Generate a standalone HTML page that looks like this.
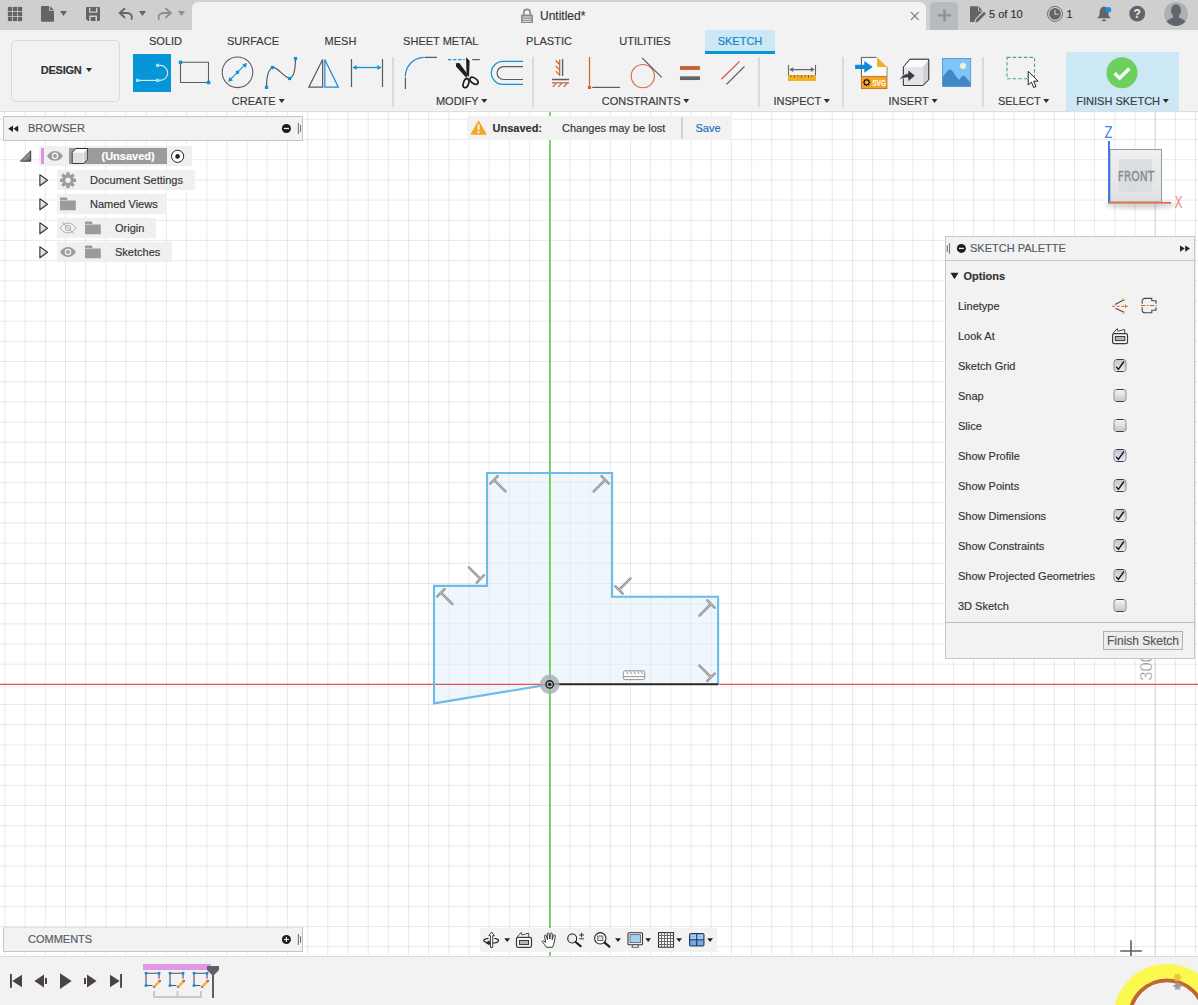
<!DOCTYPE html>
<html lang="en">
<head>
<meta charset="utf-8">
<title>Untitled* - Fusion</title>
<style>
html,body{margin:0;padding:0;}
body{width:1198px;height:1005px;overflow:hidden;position:relative;background:#fff;font-family:"Liberation Sans",Arial,sans-serif;font-size:11px;color:#3c3c3c;}
.abs{position:absolute;}
.t,.pl,.tabl,.grp{-webkit-text-stroke:0.160px currentColor;}
.t{position:absolute;white-space:nowrap;line-height:14px;height:14px;}
.b{font-weight:bold;}
#topbar{position:absolute;left:0;top:0;width:1198px;height:30px;background:#cfcfcd;}
#tab{position:absolute;left:192px;top:2px;width:734px;height:28px;background:#f2f2f2;border-radius:6px 6px 0 0;}
#toolbar{position:absolute;left:0;top:30px;width:1198px;height:81px;background:#f2f2f2;}
#canvas{position:absolute;left:0;top:111px;width:1198px;height:845px;overflow:hidden;background:#fff;}
#bottombar{position:absolute;left:0;top:956px;width:1198px;height:49px;background:#f2f2f2;overflow:hidden;}
.tabl{position:absolute;top:34px;height:14px;line-height:14px;font-size:11px;color:#3a3a3a;transform:translateX(-50%);white-space:nowrap;}
.grp{position:absolute;top:94px;height:14px;line-height:14px;font-size:11px;color:#3a3a3a;transform:translateX(-50%);white-space:nowrap;}
.sep{position:absolute;top:57px;width:1.700px;height:50px;background:#dadada;}
.dd{display:inline-block;width:0;height:0;border-left:3.800px solid transparent;border-right:3.800px solid transparent;border-top:4.300px solid #2e2e2e;vertical-align:middle;margin-left:2.700px;position:relative;top:-1px;}
.panelhdr{position:absolute;background:#f2f2f2;border:1px solid #c5c5c5;box-sizing:border-box;}
.row{position:absolute;height:19.600px;background:#f0f0f0;}
.cb{position:absolute;left:1113.5px;width:13px;height:13px;box-sizing:border-box;border:1px solid #555;border-radius:3px;background:linear-gradient(#f4f4f4,#c8ccd0);}
.pl{position:absolute;left:958px;font-size:11px;line-height:14px;height:14px;color:#333;white-space:nowrap;}
</style>
</head>
<body>
<div id="topbar"></div>
<div id="tab"></div>
<div class="t" style="left:540px;top:9px;font-size:12px;color:#333;">Untitled*</div>
<div class="abs" style="left:930px;top:2px;width:28px;height:28px;background:#b4bcc0;border-radius:5px 5px 0 0;"></div>
<div class="t" style="left:989px;top:7px;font-size:11px;color:#333;">5 of 10</div>
<div class="t" style="left:1066.5px;top:7px;font-size:11px;color:#333;">1</div>
<div id="toolbar"></div>
<div class="abs" style="left:10.800px;top:40px;width:109.500px;height:61.500px;box-sizing:border-box;border:1.600px solid #d9d9d9;border-radius:5px;"></div>
<div class="t b" style="left:40.800px;top:63px;font-size:11px;color:#333;letter-spacing:-0.250px;">DESIGN<span class="dd" style="margin-left:5px"></span></div>
<div class="abs" style="left:705px;top:30px;width:70px;height:24px;background:#cde7f6;border-bottom:3px solid #0696d7;box-sizing:border-box;"></div>
<div class="tabl" style="left:165.5px;">SOLID</div>
<div class="tabl" style="left:253px;">SURFACE</div>
<div class="tabl" style="left:340.5px;">MESH</div>
<div class="tabl" style="left:440.8px;">SHEET METAL</div>
<div class="tabl" style="left:549px;">PLASTIC</div>
<div class="tabl" style="left:645px;">UTILITIES</div>
<div class="tabl" style="left:740px;color:#0a86c8;">SKETCH</div>
<div class="abs" style="left:1066px;top:52px;width:113px;height:59px;background:#cde8f5;"></div>
<div class="abs" style="left:133px;top:54px;width:38px;height:38px;background:#0696d7;"></div>
<div class="sep" style="left:392.300px;"></div>
<div class="sep" style="left:532.300px;"></div>
<div class="sep" style="left:758.200px;"></div>
<div class="sep" style="left:842.200px;"></div>
<div class="sep" style="left:982.300px;"></div>
<div class="grp" style="left:258.05px;">CREATE<span class="dd"></span></div>
<div class="grp" style="left:461.65px;">MODIFY<span class="dd"></span></div>
<div class="grp" style="left:645.55px;">CONSTRAINTS<span class="dd"></span></div>
<div class="grp" style="left:801.65px;">INSPECT<span class="dd"></span></div>
<div class="grp" style="left:912.95px;">INSERT<span class="dd"></span></div>
<div class="grp" style="left:1023.65px;">SELECT<span class="dd"></span></div>
<div class="grp" style="left:1122.55px;">FINISH SKETCH<span class="dd"></span></div>
<div class="abs" style="left:0;top:110.800px;width:1198px;height:1.100px;background:#dedede;z-index:5;"></div>
<svg class="abs" style="left:0;top:0" width="1198" height="30" viewBox="0 0 1198 30">
<g fill="#616469">
<!-- grid -->
<path d="M8 7h4v4h-4zM13 7h4v4h-4zM18 7h4v4h-4zM8 12h4v4h-4zM13 12h4v4h-4zM18 12h4v4h-4zM8 17h4v4h-4zM13 17h4v4h-4zM18 17h4v4h-4z" stroke="#616469" stroke-width="0.250" stroke-linejoin="round"/>
<!-- file -->
<path d="M42.2 6h7v4.8h4.8v9.8a1.2 1.2 0 0 1-1.2 1.2h-10.6a1.2 1.2 0 0 1-1.2-1.2v-13.4a1.2 1.2 0 0 1 1.2-1.2zM50.2 6.3l3.6 3.6h-3.6z"/>
<path d="M60 11h7l-3.5 5z"/>
<!-- save -->
<path d="M87 7h12a1 1 0 0 1 1 1v12a1 1 0 0 1-1 1h-11l-2-2v-11a1 1 0 0 1 1-1zM89 7.8v5h8.400v-5h-1.4v3.600h-5.600v-3.600zM89.300 21v-5.400h7.700v5.400h-1.500v-3.900h-4.700v3.900z" fill-rule="evenodd"/>
<!-- undo -->
<path d="M125 8.300l-5.300 4.700 5.300 4.700" fill="none" stroke="#616469" stroke-width="1.900" stroke-linejoin="miter"/>
<path d="M120.500 13h6.500a4.500 4.500 0 0 1 4.300 6.800" fill="none" stroke="#616469" stroke-width="1.900"/>
<path d="M139 11h7l-3.500 5z"/>
</g>
<g fill="#8c8e92">
<path d="M165.500 8.300l5.300 4.700-5.300 4.700" fill="none" stroke="#8c8e92" stroke-width="1.900"/>
<path d="M170 13h-6.500a4.500 4.500 0 0 0-4.300 6.800" fill="none" stroke="#8c8e92" stroke-width="1.900"/>
<path d="M178 11h7l-3.500 5z"/>
</g>
<!-- lock -->
<g transform="translate(0 0.800)">
<path d="M523.800 14v-2.200a3.200 3.200 0 0 1 6.400 0v2.200" fill="none" stroke="#8a8a8a" stroke-width="1.700"/>
<rect x="521" y="13.600" width="12" height="8.600" rx="0.800" fill="#8a8a8a"/>
<path d="M522.500 16.200h9M522.500 18.400h9M522.500 20.500h9" stroke="#f2f2f2" stroke-width="0.900"/>
</g>
<!-- close x -->
<path d="M911 12.200l7.600 7.600M918.600 12.200l-7.600 7.600" stroke="#777" stroke-width="1.200" fill="none"/>
<!-- plus -->
<path d="M938 15.400h13M944.500 9.400v12" stroke="#8d9194" stroke-width="2.400" fill="none"/>
<!-- file pencil -->
<g fill="#616469">
<path d="M970 6.300h8.200v5h4.300l-7.300 7.600-1 3h-4.200zM979 6.600l3.400 3.800h-3.400z"/>
<path d="M984 11.800l2 2-7.800 7.800-2.800 0.800 0.800-2.800z"/>
</g>
<!-- clock -->
<circle cx="1055" cy="13.900" r="7.500" fill="none" stroke="#616469" stroke-width="0.900"/>
<circle cx="1055" cy="13.900" r="5.800" fill="#616469"/>
<path d="M1055 10v4.200h3.600" stroke="#cfcfcd" stroke-width="1.100" fill="none"/>
<!-- bell -->
<g fill="#616469">
<path d="M1104 6.800c3 0 4.300 2.600 4.300 5.600 0 2.600 0.800 4.200 2.500 5.800h-13.600c1.700-1.600 2.500-3.200 2.500-5.800 0-3 1.300-5.600 4.300-5.600z"/>
<path d="M1102 19.600h4a2 2 0 0 1-4 0z"/>
</g>
<circle cx="1108.300" cy="9.800" r="2.900" fill="#1e90e0"/>
<!-- help -->
<circle cx="1137.200" cy="13.700" r="7.900" fill="#616469"/>
<text x="1137.200" y="18" text-anchor="middle" font-family="Liberation Sans, sans-serif" font-weight="bold" font-size="12" fill="#f2f2f2">?</text>
<!-- avatar -->
<clipPath id="avc"><circle cx="1176" cy="14" r="11.900"/></clipPath>
<circle cx="1176" cy="14" r="11.900" fill="#aab0b8"/>
<g clip-path="url(#avc)" fill="#626569">
<ellipse cx="1176" cy="10.500" rx="5" ry="6.300"/>
<path d="M1164.500 27c0-5.500 4-8 8.500-9.300h6c4.500 1.300 8.500 3.800 8.500 9.300z"/>
<rect x="1173" y="14" width="6" height="6"/>
</g>
</svg>
<svg class="abs" style="left:0;top:30px" width="1198" height="81" viewBox="0 30 1198 81">
<!-- line tool (active) -->
<g>
<path d="M139 80.400H156" stroke="#e6eef2" stroke-width="1.100"/>
<path d="M159.200 65.400h1a7.500 7.500 0 0 1 0 15h-1" fill="none" stroke="#d6e6ee" stroke-width="1.100"/>
<rect x="136" y="78.800" width="3.200" height="3.200" fill="#a9d9f3"/>
<rect x="156" y="78.800" width="3.200" height="3.200" fill="#a9d9f3"/>
<rect x="156" y="63.800" width="3.200" height="3.200" fill="#a9d9f3"/>
</g>
<!-- rectangle -->
<path d="M180.500 62.300h28v20.200h-28z" fill="none" stroke="#595b60" stroke-width="1.050"/>
<rect x="178.800" y="60.600" width="3.400" height="3.400" fill="#0696d7"/>
<rect x="206.900" y="80.800" width="3.400" height="3.400" fill="#0696d7"/>
<!-- circle -->
<circle cx="237.500" cy="72.300" r="15.300" fill="none" stroke="#5e5456" stroke-width="1.050"/>
<path d="M230.500 79.300L244.600 65.200" stroke="#1493dc" stroke-width="1.100"/>
<path d="M228.200 81.700l1.200-4.800 3.600 3.600zM247 63.100l-1.200 4.800-3.600-3.600z" fill="#1493dc"/>
<rect x="235.900" y="70.700" width="3.200" height="3.200" fill="#0696d7"/>
<!-- spline -->
<path d="M266.500 87.400C266.500 78 268.500 69.500 272.400 67.500C277 66.500 283 76.500 289.600 78.500C293.500 77 295.500 69 295.500 58.500" fill="none" stroke="#595b60" stroke-width="1.200"/>
<g fill="#0696d7"><rect x="264.900" y="85.800" width="3.200" height="3.200"/><rect x="270.800" y="65.900" width="3.200" height="3.200"/><rect x="288" y="76.900" width="3.200" height="3.200"/><rect x="293.900" y="56.900" width="3.200" height="3.200"/></g>
<!-- mirror -->
<path d="M322.600 59.600V87.200H308.800Z" fill="none" stroke="#595b60" stroke-width="1.200"/>
<path d="M324.800 59.600V87.200H338.300Z" fill="none" stroke="#1a8ad6" stroke-width="1.200"/>
<!-- dimension -->
<path d="M351.500 59V87M382.500 59V87" stroke="#595b60" stroke-width="1.200"/>
<path d="M355 67.500H379" stroke="#1493dc" stroke-width="1.300"/>
<path d="M352.400 67.500l4.200-2.400v4.800zM381.600 67.500l-4.200-2.400v4.800z" fill="#1493dc"/>
<!-- fillet -->
<path d="M405.400 77.500V89M424.500 57.300H437" stroke="#595b60" stroke-width="1.200"/>
<path d="M405.400 76.500A19 19 0 0 1 423.700 57.400" fill="none" stroke="#1a8ad6" stroke-width="1.200"/>
<!-- trim -->
<path d="M448 59.600H464.500" stroke="#1493dc" stroke-width="1.200" stroke-dasharray="3.300 1.800"/>
<path d="M472.200 59.600H479.800" stroke="#595b60" stroke-width="1.200"/>
<g fill="#1e1e1e">
<path d="M466 57.200l3.600 3.600-0.600 16.200-2.300 0.500z"/>
<path d="M455.900 63.200l3.400-0.200 10 13.400-2.600 1.800-10.600-11.600z"/>
</g>
<ellipse cx="466" cy="83.200" rx="2.600" ry="4.600" transform="rotate(18 466 83.200)" fill="none" stroke="#1e1e1e" stroke-width="1.700"/>
<ellipse cx="474" cy="80.800" rx="2.600" ry="4.600" transform="rotate(-55 474 80.800)" fill="none" stroke="#1e1e1e" stroke-width="1.700"/>
<circle cx="467.600" cy="76.800" r="1" fill="#f2f2f2"/>
<!-- offset -->
<path d="M523 61.300H502.900a11.550 11.550 0 0 0 0 23.100H523" fill="none" stroke="#1493dc" stroke-width="1.300"/>
<path d="M523 66.600H503.500a6.450 6.450 0 0 0 0 12.900H523" fill="none" stroke="#595b60" stroke-width="1.200"/>
<!-- horiz/vert -->
<path d="M562.600 59V76M552 79.500H569" stroke="#595b60" stroke-width="1.300"/>
<path d="M559.700 59.500V76M559.700 64.500l-4-4M559.700 69.800l-4-4M559.700 75.200l-4-4M552 82.800H569M556.500 82.800l-3.600 4M562 82.800l-3.600 4M567.500 82.800l-3.600 4" stroke="#c8642d" stroke-width="1.200" fill="none"/>
<!-- coincident -->
<path d="M589.500 57V85.500" stroke="#c8642d" stroke-width="1.200"/>
<rect x="587.900" y="85.800" width="3.200" height="3.200" fill="#c8642d"/>
<path d="M592.200 87.400H620" stroke="#595b60" stroke-width="1.200"/>
<!-- tangent -->
<circle cx="642.800" cy="76.100" r="11.600" fill="none" stroke="#d06a4a" stroke-width="1.100"/>
<path d="M642 57.900L661.800 77.400" stroke="#595b60" stroke-width="1.200"/>
<!-- equal -->
<rect x="679.500" y="65.700" width="20.800" height="4.600" fill="#c0622f" stroke="#fafafa" stroke-width="0.800"/>
<rect x="679.500" y="75.900" width="20.800" height="4.600" fill="#616469" stroke="#fafafa" stroke-width="0.800"/>
<!-- parallel -->
<path d="M721.400 79.300L739.600 61.400" stroke="#d2504c" stroke-width="1.200"/>
<path d="M726.500 84.400L744.500 66.300" stroke="#5b5456" stroke-width="1.200"/>
<!-- inspect -->
<rect x="788" y="75" width="28" height="6" fill="#f1b021"/>
<path d="M791 75v2M794.500 75v3M798 75v2M801.500 75v3M805 75v2M808.500 75v3M812 75v2" stroke="#7a6a3a" stroke-width="0.900"/>
<path d="M788.500 65V75M815.500 65V75M791 69.600H813" stroke="#66686c" stroke-width="1.100"/>
<path d="M789.200 69.600l4-2.300v4.600zM814.800 69.600l-4-2.300v4.600z" fill="#66686c"/>
<!-- insert svg -->
<path d="M861.400 76V57.400H876.500M886.900 67V76" fill="none" stroke="#595b60" stroke-width="1"/>
<path d="M862 58h15v9h9.500v9h-24.500z" fill="#fafafa"/>
<path d="M877.200 57.200l9.800 9.700h-9.800z" fill="#f1b021"/>
<path d="M855.100 64.700h9.200v-3.600l8.400 5.800-8.400 5.800v-3.700h-9.200z" fill="#0a8ad8"/>
<rect x="861.400" y="76.400" width="25.500" height="12.200" fill="#f1a91f" stroke="#c8642d" stroke-width="0.900"/>
<text x="872.200" y="85.900" font-family="Liberation Sans, sans-serif" font-weight="bold" font-size="8.500" fill="#fff" textLength="14" lengthAdjust="spacingAndGlyphs">SVG</text>
<g stroke="#111" stroke-width="1" fill="none"><circle cx="866.600" cy="82.400" r="2.500"/><path d="M866.600 78.700v1.400M866.600 84.700v1.400M862.900 82.400h1.400M868.900 82.400h1.400M864 79.800l1 1M868.200 84l1 1M864 85l1-1M868.200 80.800l1-1" stroke-width="1.300"/></g>
<!-- derive cube -->
<path d="M903.400 67L909.800 59.300H928.700V79.800L922.800 85.500H903.400Z" fill="#f4f4f5" stroke="#3a3a45" stroke-width="1"/>
<path d="M922.800 67L928.700 59.300V79.800L922.800 85.500Z" fill="#d0d1d4"/>
<path d="M903.400 67H922.800V85.500H903.400Z" fill="#e3e4e6"/>
<path d="M903.400 67L909.800 59.300H928.700L922.800 67Z" fill="#fbfbfb"/>
<path d="M903.400 67L909.800 59.300H928.700V79.800L922.800 85.500H903.400Z" fill="none" stroke="#3a3a45" stroke-width="1"/>
<path d="M899.400 79.800c2.200-4 5-6 8.600-6.200v-3.800l7.200 5.900-7.200 6v-3.900c-3.200-0.200-6 0.500-8.600 2z" fill="#3a3a45" stroke="#f2f2f2" stroke-width="0.600"/>
<!-- image -->
<rect x="942.400" y="58.400" width="28.300" height="28" fill="#80c5fa" stroke="#4a90d2" stroke-width="0.800"/>
<path d="M942.800 77l5-6.500c1.600-1.200 3-1.200 4.200 0l6.800 9.600 3.300-3.900c1-1 2-1 2.800 0l5.400 6v4h-27.500z" fill="#3f88c5"/>
<circle cx="963" cy="65.800" r="3.100" fill="#f5f1c9"/>
</svg>
<svg class="abs" style="left:985px;top:50px" width="213" height="61" viewBox="985 50 213 61">
<rect x="1007" y="57.400" width="27.500" height="21.400" fill="none" stroke="#4fae68" stroke-width="1.100" stroke-dasharray="3.600 2"/>
<path d="M1028.200 71.300v13.700l3.200-2.900 2.300 5.400 2.300-1-2.300-5.300h4.400z" fill="#fff" stroke="#22222c" stroke-width="1"/>
<circle cx="1122" cy="72.800" r="15.500" fill="#6dcf5d"/>
<path d="M1114.600 73.200l5 4.900 9.800-9.600" fill="none" stroke="#fff" stroke-width="3.400"/>
</svg>
<div id="canvas">
<svg class="abs" style="left:0;top:0" width="1198" height="845" viewBox="0 0 1198 845"><path d="M4.94 0V845M25.12 0V845M45.3 0V845M65.48 0V845M85.66 0V845M105.84 0V845M126.02 0V845M146.2 0V845M166.38 0V845M186.56 0V845M206.74 0V845M226.92 0V845M247.1 0V845M267.28 0V845M287.46 0V845M307.64 0V845M327.82 0V845M348.0 0V845M368.18 0V845M388.36 0V845M408.54 0V845M428.72 0V845M448.9 0V845M469.08 0V845M489.26 0V845M509.44 0V845M529.62 0V845M569.98 0V845M590.16 0V845M610.34 0V845M630.52 0V845M650.7 0V845M670.88 0V845M691.06 0V845M711.24 0V845M731.42 0V845M751.6 0V845M771.78 0V845M791.96 0V845M812.14 0V845M832.32 0V845M852.5 0V845M872.68 0V845M892.86 0V845M913.04 0V845M933.22 0V845M953.4 0V845M973.58 0V845M993.76 0V845M1013.94 0V845M1034.12 0V845M1054.3 0V845M1074.48 0V845M1094.66 0V845M1114.84 0V845M1135.02 0V845M1155.2 0V845M1175.38 0V845M1195.56 0V845" stroke="#000" stroke-opacity="0.085" stroke-width="1" fill="none"/><path d="M0 8.36H1198M0 28.54H1198M0 48.72H1198M0 68.9H1198M0 89.08H1198M0 109.26H1198M0 129.44H1198M0 149.62H1198M0 169.8H1198M0 189.98H1198M0 210.16H1198M0 230.34H1198M0 250.52H1198M0 270.7H1198M0 290.88H1198M0 311.06H1198M0 331.24H1198M0 351.42H1198M0 371.6H1198M0 391.78H1198M0 411.96H1198M0 432.14H1198M0 452.32H1198M0 472.5H1198M0 492.68H1198M0 512.86H1198M0 533.04H1198M0 553.22H1198M0 593.58H1198M0 613.76H1198M0 633.94H1198M0 654.12H1198M0 674.3H1198M0 694.48H1198M0 714.66H1198M0 734.84H1198M0 755.02H1198M0 775.2H1198M0 795.38H1198M0 815.56H1198M0 835.74H1198" stroke="#000" stroke-opacity="0.085" stroke-width="1" fill="none"/><path d="M1155.2 0V845" stroke="#000" stroke-opacity="0.1" stroke-width="1.2" fill="none"/></svg>
<!-- axes & sketch (canvas coords: y offset -111) -->
<svg class="abs" style="left:0;top:0" width="1198" height="845" viewBox="0 111 1198 845">
<path d="M487 473H612.100V596.800H718.100V684.400H549.800L434 703.400V585.900H487Z" fill="#dcecf8" fill-opacity="0.45" stroke="none"/>
<path d="M0 684.400H1198" stroke="#e8544e" stroke-width="1.250"/>
<path d="M549.900 111V956" stroke="#62d052" stroke-width="1.800"/>
<path d="M549.800 684.400L434 703.400V585.900H487V473H612.100V596.800H718.100V684.400" fill="none" stroke="#6dbbe8" stroke-width="2.100" stroke-linejoin="miter"/>
<path d="M549.800 684.300H718.100" stroke="#2a2a2a" stroke-width="1.900"/>
<circle cx="549.700" cy="684.400" r="7" fill="none" stroke="#a7aeb1" stroke-opacity="0.800" stroke-width="5.600"/>
<circle cx="549.700" cy="684.400" r="3.700" fill="#b4b4bc" stroke="#1e1a22" stroke-width="1.400"/>
<circle cx="549.700" cy="684.400" r="1.700" fill="#1e1a22"/>
</svg>
<svg class="abs" style="left:1136px;top:535px" width="20" height="40" viewBox="1136 646 20 40">
<text transform="translate(1151.900 680.700) rotate(-90)" font-family="Liberation Sans, sans-serif" font-size="16.600" fill="#8e9297" stroke="#fff" stroke-width="0.350">300</text>
</svg>
<!-- browser -->
<div class="panelhdr" style="left:2.900px;top:5.200px;width:300px;height:24.500px;"></div>
<div class="t" style="left:28px;top:10px;color:#555b63;">BROWSER</div>
<div class="row" style="left:39px;top:35px;width:152.5px;"></div>
<div class="abs" style="left:69px;top:37px;width:98px;height:16px;background:#9b9b9b;"></div>
<div class="t b" style="left:101.5px;top:38px;color:#fff;">(Unsaved)</div>
<div class="row" style="left:57px;top:59.100px;width:137.5px;"></div>
<div class="t" style="left:90px;top:62px;color:#333;">Document Settings</div>
<div class="row" style="left:57px;top:83.100px;width:109.5px;"></div>
<div class="t" style="left:90px;top:86px;color:#333;">Named Views</div>
<div class="row" style="left:57px;top:107.100px;width:98.5px;"></div>
<div class="t" style="left:115px;top:110px;color:#333;">Origin</div>
<div class="row" style="left:57px;top:131.100px;width:114.5px;"></div>
<div class="t" style="left:115px;top:134px;color:#333;">Sketches</div>
<!-- notification -->
<div class="abs" style="left:467px;top:5px;width:265px;height:24px;background:#f2f2f2;"></div>
<div class="t b" style="left:492.5px;top:10px;color:#333;">Unsaved:</div>
<div class="t" style="left:562px;top:10px;color:#333;">Changes may be lost</div>
<div class="abs" style="left:681.300px;top:6px;width:1.700px;height:22px;background:#d2d2d2;"></div>
<div class="t" style="left:695.5px;top:10px;color:#1a6fb5;">Save</div>
<!-- palette -->
<div class="abs" style="left:945.200px;top:125.200px;width:250px;height:422.500px;background:#f2f2f2;border:1px solid #c6c6c6;box-sizing:border-box;"></div>
<div class="abs" style="left:945.200px;top:148.900px;width:250px;height:1px;background:#c6c6c6;"></div>
<div class="t" style="left:970px;top:130px;color:#555b63;">SKETCH PALETTE</div>
<div class="t b" style="left:963.5px;top:158px;color:#333;">Options</div>
<div class="pl" style="top:188px;">Linetype</div>
<div class="pl" style="top:218px;">Look At</div>
<div class="pl" style="top:248px;">Sketch Grid</div>
<div class="pl" style="top:278px;">Snap</div>
<div class="pl" style="top:308px;">Slice</div>
<div class="pl" style="top:338px;">Show Profile</div>
<div class="pl" style="top:368px;">Show Points</div>
<div class="pl" style="top:398px;">Show Dimensions</div>
<div class="pl" style="top:428px;">Show Constraints</div>
<div class="pl" style="top:458px;">Show Projected Geometries</div>
<div class="pl" style="top:488px;">3D Sketch</div>
<div class="abs" style="left:946px;top:510.900px;width:248.500px;height:1px;background:#bcbcbc;"></div>
<div class="abs" style="left:1103px;top:520px;width:80px;height:19px;box-sizing:border-box;border:1px solid #a9b4b4;background:#ececec;"></div>
<div class="t" style="left:1107px;top:522.5px;font-size:12px;color:#555;">Finish Sketch</div>
<!-- comments -->
<div class="panelhdr" style="left:2.900px;top:815.700px;width:300px;height:25px;border-top-color:#e2e2e2;"></div>
<div class="t" style="left:28px;top:821px;color:#555b63;">COMMENTS</div>
<!-- nav bar -->
<div class="abs" style="left:480px;top:817px;width:237px;height:24px;background:#f2f2f2;"></div>
<svg class="abs" style="left:0;top:0" width="310" height="160" viewBox="0 111 310 160">
<defs>
<linearGradient id="tg" x1="0" y1="0" x2="1" y2="1"><stop offset="0" stop-color="#fff"/><stop offset="1" stop-color="#bbb"/></linearGradient>
<linearGradient id="tg2" x1="0" y1="0" x2="1" y2="1"><stop offset="0" stop-color="#e8e8e8"/><stop offset="1" stop-color="#555"/></linearGradient>
<g id="fold"><path d="M0 0h6.600l1 1.800v0.600h-7.600zM0 3.100h15.800v9.600h-15.800z" fill="#9b9b9b"/></g>
<g id="eye"><path d="M0 0c2.300-3.300 5-4.900 8-4.900s5.700 1.600 8 4.900c-2.300 3.300-5 4.900-8 4.900s-5.700-1.600-8-4.900z" fill="#9b9b9b"/><circle cx="8" cy="0" r="3.300" fill="#f0f0f0"/><circle cx="8" cy="0" r="1.900" fill="#9b9b9b"/></g>
<g id="exp"><path d="M0.600 0.800v11l7.600-5.500z" fill="url(#tg)" stroke="#3a3a3a" stroke-width="1.200" stroke-linejoin="round"/></g>
</defs>
<!-- header icons -->
<path d="M8.200 128.700l4.800-3.200v6.400zM13.400 128.700l4.800-3.200v6.400z" fill="#222"/>
<circle cx="286.400" cy="128.500" r="4.500" fill="#1c1c1c"/>
<path d="M283.800 128.500h5.200" stroke="#f2f2f2" stroke-width="1.300"/>
<path d="M298.400 123v11M300.500 125v7" stroke="#77777d" stroke-width="1.100"/>
<!-- root row -->
<path d="M20.400 161.200h10.300v-10.400z" fill="url(#tg2)" stroke="#333" stroke-width="0.900" stroke-linejoin="round"/>
<rect x="41" y="148" width="3" height="16" fill="#e48ee0"/>
<use href="#eye" x="47" y="155.900"/>
<path d="M72.300 152.300l3.600-3.800h11.600v10.600l-3.600 4.300h-11.600z" fill="#fff" stroke="#2a2a3c" stroke-width="1" stroke-linejoin="round"/>
<path d="M72.800 152.600h10.800v10.400h-10.800z" fill="#dfe0e1"/>
<path d="M84 152.500l3.200-3.600v9.900l-3.200 3.900z" fill="#c9cacc"/>
<circle cx="177.600" cy="156.300" r="6.100" fill="#fff" stroke="#222" stroke-width="1"/>
<circle cx="177.600" cy="156.400" r="2.300" fill="#222"/>
<!-- expanders -->
<use href="#exp" x="39.300" y="174"/>
<use href="#exp" x="39.300" y="198"/>
<use href="#exp" x="39.300" y="222"/>
<use href="#exp" x="39.300" y="246"/>
<!-- gear -->
<g transform="translate(68 180.200)" fill="#9b9b9b">
<circle r="5.600"/>
<g><rect x="-1.700" y="-8" width="3.400" height="16" rx="0.500"/><rect x="-1.700" y="-8" width="3.400" height="16" rx="0.500" transform="rotate(45)"/><rect x="-1.700" y="-8" width="3.400" height="16" rx="0.500" transform="rotate(90)"/><rect x="-1.700" y="-8" width="3.400" height="16" rx="0.500" transform="rotate(135)"/></g>
<circle r="2.700" fill="#f0f0f0"/>
</g>
<use href="#fold" x="60" y="197.500"/>
<!-- eye slash -->
<path d="M60 228c2.300-3.300 5-4.900 8-4.900s5.700 1.600 8 4.900c-2.300 3.300-5 4.900-8 4.900s-5.700-1.600-8-4.900z" fill="none" stroke="#a4a4a4" stroke-width="0.900"/>
<circle cx="68" cy="228" r="2.600" fill="none" stroke="#a4a4a4" stroke-width="0.900"/>
<path d="M62.300 222.200l11.600 11.400" stroke="#a4a4a4" stroke-width="0.900"/>
<use href="#fold" x="85" y="221.500"/>
<use href="#eye" x="60" y="252"/>
<use href="#fold" x="85" y="245.500"/>
</svg>
<svg class="abs" style="left:940px;top:120px" width="258" height="440" viewBox="940 231 258 440">
<defs>
<linearGradient id="cbu" x1="0" y1="0" x2="0" y2="1"><stop offset="0" stop-color="#f6f6f6"/><stop offset="1" stop-color="#c2c7cb"/></linearGradient>
<linearGradient id="cbc" x1="0" y1="0" x2="0" y2="1"><stop offset="0" stop-color="#c0c8d0"/><stop offset="1" stop-color="#ececec"/></linearGradient>
<g id="cbU"><rect x="0.500" y="0.500" width="12" height="12" rx="2.800" fill="url(#cbu)" stroke="#8a8c94" stroke-width="1"/><path d="M3 0.500h7M3 12.500h7" stroke="#3a3c50" stroke-width="1"/></g>
<g id="cbC"><rect x="0.500" y="0.500" width="12" height="12" rx="2.800" fill="url(#cbc)" stroke="#8a8c94" stroke-width="1"/><path d="M3 0.500h7M3 12.500h7" stroke="#3a3c50" stroke-width="1"/><path d="M2.700 7.800l2.200 2.600 5.500-7.900" fill="none" stroke="#15151c" stroke-width="1.400"/></g>
</defs>
<!-- header icons -->
<path d="M947.300 245.200v6.800M949.500 243.200v10.500" stroke="#77777d" stroke-width="1.100"/>
<circle cx="961.400" cy="248.400" r="4.500" fill="#1c1c1c"/><path d="M958.900 248.400h5" stroke="#f2f2f2" stroke-width="1.300"/>
<path d="M1180 245.400l4.800 3.200-4.800 3.200zM1185.200 245.400l4.800 3.200-4.800 3.200z" fill="#222"/>
<path d="M950.500 272.800h8l-4 6.400z" fill="#222"/>
<!-- construction -->
<path d="M1112 306.300h16" stroke="#d9642a" stroke-width="1.100" stroke-dasharray="3 1.600"/>
<path d="M1115 304.400l8.600-4.400M1115.500 308.300l8.400 4" stroke="#444851" stroke-width="1.100"/>
<path d="M1122.500 298.200l2.600 2.600M1122.500 314l2.600-2.600" stroke="#f1b021" stroke-width="1.100"/>
<path d="M1125.300 304.500v3.600" stroke="#d9642a" stroke-width="1.100"/>
<!-- centerline -->
<path d="M1142.200 303.800v-3a2.400 2.400 0 0 1 2.400-2.400h7.200v2.400h4.200v3M1142.200 307.300v3a2.400 2.400 0 0 0 2.400 2.400h7.200v-2.400h4.200v-3" fill="none" stroke="#444851" stroke-width="1.100"/>
<path d="M1141 305.500h16" stroke="#d9642a" stroke-width="1.100" stroke-dasharray="4.500 1.500 1.500 1.500"/>
<!-- look at -->
<rect x="1112.600" y="333.600" width="14.900" height="10" rx="1.600" fill="#f6f6f6" stroke="#3a3a45" stroke-width="1.200"/>
<rect x="1115.400" y="336.500" width="9.400" height="4.100" fill="#b4b8bb" stroke="#3a3a45" stroke-width="1"/>
<path d="M1113 333.200l4.200-4.600 0.700 2.600 6.800-1.800v3.800" fill="none" stroke="#3a3a45" stroke-width="0.900"/>
<use href="#cbC" x="1113.500" y="359"/>
<use href="#cbU" x="1113.500" y="389"/>
<use href="#cbU" x="1113.500" y="419"/>
<use href="#cbC" x="1113.500" y="449"/>
<use href="#cbC" x="1113.500" y="479"/>
<use href="#cbC" x="1113.500" y="509"/>
<use href="#cbC" x="1113.500" y="539"/>
<use href="#cbC" x="1113.500" y="569"/>
<use href="#cbU" x="1113.500" y="599"/>
</svg>
<svg class="abs" style="left:1080px;top:4px" width="118" height="110" viewBox="1080 115 118 110">
<defs>
<linearGradient id="vcg" x1="0" y1="0" x2="0" y2="1"><stop offset="0" stop-color="#f0f0f0"/><stop offset="1" stop-color="#dcdfe1"/></linearGradient>
<filter id="vcb" x="-20%" y="-100%" width="140%" height="300%"><feGaussianBlur stdDeviation="2.2"/></filter>
</defs>
<ellipse cx="1140" cy="205" rx="36" ry="3.500" fill="#000" opacity="0.18" filter="url(#vcb)"/>
<rect x="1110" y="149.500" width="51.500" height="52.500" fill="url(#vcg)" fill-opacity="0.93" stroke="#8e9aa5" stroke-width="1"/>
<rect x="1119" y="159" width="33" height="32.500" fill="#d5dade" fill-opacity="0.75"/>
<text x="1136" y="180.800" text-anchor="middle" font-family="DejaVu Sans Condensed, DejaVu Sans, sans-serif" font-size="14.500" fill="#8a8a8a" stroke="#8a8a8a" stroke-width="0.300" textLength="36.500" lengthAdjust="spacingAndGlyphs">FRONT</text>
<path d="M1109 141V203.500" stroke="#3f7be0" stroke-width="2"/>
<path d="M1108.500 202.800H1162" stroke="#e07a55" stroke-width="2"/>
<path d="M1162 202.800H1171" stroke="#e85a5a" stroke-width="1.600"/>
<text x="1108.500" y="137.800" text-anchor="middle" font-family="DejaVu Sans Condensed, DejaVu Sans, sans-serif" font-size="15.500" fill="#4a80e2" textLength="8" lengthAdjust="spacingAndGlyphs">Z</text>
<text x="1178.500" y="207.600" text-anchor="middle" font-family="DejaVu Sans Condensed, DejaVu Sans, sans-serif" font-size="15.500" fill="#e3917c" textLength="8" lengthAdjust="spacingAndGlyphs">X</text>
</svg>
<svg class="abs" style="left:478px;top:813px" width="250" height="32" viewBox="478 924 250 32">
<g fill="#222"><path d="M504.300 938.300h5.800l-2.900 3.800zM615.100 938.300h5.800l-2.900 3.800zM645.300 938.300h5.800l-2.900 3.800zM676.200 938.300h5.800l-2.900 3.800zM707.200 938.300h5.800l-2.900 3.800z"/></g>
<!-- orbit -->
<path d="M494.500 938.300c2.600 0.400 4 1.200 4 2.200 0 1.600-3.400 2.700-7.500 2.700-1.600 0-3.200-0.200-4.400-0.500" fill="none" stroke="#222" stroke-width="1.200"/>
<path d="M488.500 938.400c-3 0.400-4.800 1.200-4.800 2.200 0 0.700 0.800 1.300 2.100 1.800" fill="none" stroke="#222" stroke-width="1.200"/>
<path d="M489.600 940.300l-4.300 2.500 4.300 2.800z" fill="#222"/>
<path d="M490.500 947.400v-11.700h-1.700l2.800-3.700 2.800 3.700h-1.700v11.700z" fill="#fff" stroke="#222" stroke-width="0.850" stroke-linejoin="round"/>
<!-- look at -->
<rect x="516.500" y="937.300" width="15" height="10" rx="1.500" fill="#f6f6f6" stroke="#3a3a45" stroke-width="1.200"/>
<rect x="519.500" y="940.500" width="9" height="4" fill="#b4b8bb" stroke="#3a3a45" stroke-width="1"/>
<path d="M517 937l4.200-4.600 0.700 2.600 6.800-1.800v3.800" fill="none" stroke="#3a3a45" stroke-width="0.900"/>
<!-- hand -->
<path d="M546.500 947.300c-1-1.800-2.400-3.600-4-5.200-0.600-0.700 0.300-1.700 1.200-1.200l2 1.500-1.200-6.200c-0.200-1.200 1.400-1.600 1.800-0.400l1.200 3.800-0.300-5.600c0-1.200 1.700-1.300 1.900-0.100l0.700 5.200 0.600-5.300c0.200-1.200 1.900-1 1.900 0.200l-0.100 5.600 1.300-4.100c0.400-1.100 2-0.700 1.800 0.500-0.500 3.200-0.600 5.200-1.600 8.300l-1.200 3z" fill="#fff" stroke="#222" stroke-width="0.900" stroke-linejoin="round"/>
<!-- zoom -->
<circle cx="572.200" cy="938.500" r="4.500" fill="#e8f0f6" stroke="#222" stroke-width="1.100"/>
<path d="M575.600 942l5 4.200" stroke="#222" stroke-width="2.200" stroke-linecap="round"/>
<path d="M579.200 935h4.800M581.600 932.600v4.800M579.200 938.800h4.800" stroke="#222" stroke-width="0.900"/>
<!-- zoom window -->
<circle cx="600.300" cy="938.300" r="5.700" fill="#fff" stroke="#222" stroke-width="1.100"/>
<rect x="597.800" y="936" width="5" height="4.600" fill="#e4e4e4" stroke="#555" stroke-width="0.900"/>
<path d="M604.600 942.700l4.800 4" stroke="#222" stroke-width="2.200" stroke-linecap="round"/>
<!-- display -->
<rect x="628" y="932.700" width="14.500" height="12" rx="1" fill="#f6f6f6" stroke="#333" stroke-width="1.100"/>
<rect x="630" y="934.700" width="10.500" height="8" fill="#a4d0f2" stroke="#445" stroke-width="0.700"/>
<path d="M633 944.800h4.600l1.200 2.500h-7z" fill="#fff" stroke="#333" stroke-width="0.800"/>
<!-- grid -->
<rect x="658.500" y="932.600" width="15" height="14.600" fill="#fafafa" stroke="#333" stroke-width="1.100"/>
<path d="M661.500 932.600v14.600M664.500 932.600v14.600M667.500 932.600v14.600M670.500 932.600v14.600M658.500 935.500h15M658.500 938.500h15M658.500 941.500h15M658.500 944.500h15" stroke="#6a6a6a" stroke-width="1"/>
<!-- viewports -->
<rect x="689.500" y="933.500" width="14.500" height="12.500" rx="1" fill="#4a86c8" stroke="#2a3a58" stroke-width="1"/>
<path d="M696.750 933.500v12.500M689.500 939.750h14.500" stroke="#2a3a58" stroke-width="1.100"/>
<rect x="690.500" y="934.500" width="5.600" height="4.600" fill="#a8d0f0"/><rect x="697.500" y="934.500" width="5.600" height="4.600" fill="#a8d0f0"/>
<rect x="690.500" y="940.500" width="5.600" height="4.600" fill="#6aa8e4"/><rect x="697.500" y="940.500" width="5.600" height="4.600" fill="#6aa8e4"/>
<path d="M692 936.800h2.600M699 936.800h2.600M692 942.800h2.600M699 942.800h2.600" stroke="#9ab" stroke-width="1.400"/>
</svg>
<svg class="abs" style="left:400px;top:329px" width="360" height="290" viewBox="400 440 360 290">
<defs><g id="perp"><path d="M-5.200 0H5.200M0 0V16.300" fill="none" stroke="#8d9195" stroke-width="2.500" stroke-linecap="round"/><path d="M-5.200 0H5.200M0 0V16.300" fill="none" stroke="#c3c7ca" stroke-width="0.900" stroke-linecap="round"/></g></defs>
<use href="#perp" transform="translate(493.95 479.85) rotate(-45)"/>
<use href="#perp" transform="translate(605.2 479.85) rotate(45)"/>
<use href="#perp" transform="translate(480.4 578.9) rotate(135)"/>
<use href="#perp" transform="translate(440.9 592.7) rotate(-45)"/>
<use href="#perp" transform="translate(618.95 589.9) rotate(-135)"/>
<use href="#perp" transform="translate(710.95 604) rotate(45)"/>
<use href="#perp" transform="translate(710.95 677.2) rotate(135)"/>
<rect x="623.300" y="670.800" width="21.400" height="8.800" rx="1.800" fill="#fbfbfb" stroke="#8a8a8a" stroke-width="0.900"/>
<path d="M623.500 676.600h21" stroke="#8a8a8a" stroke-width="0.900"/>
<path d="M626 671.300l2.200 2.600M629.700 671.300l2.200 2.600M633.400 671.300l2.200 2.600M637.100 671.300l2.200 2.600M640.800 671.300l2.200 2.600" stroke="#8a8a8a" stroke-width="1"/>
</svg>
<svg class="abs" style="left:1110px;top:820px" width="50" height="30" viewBox="1110 931 50 30">
<path d="M1120.200 951h21.700M1131 940.200v15.800" stroke="#5e5e64" stroke-width="1.600" fill="none"/>
</svg>
<svg class="abs" style="left:466px;top:5px" width="30" height="24" viewBox="466 116 30 24">
<path d="M478.600 120.200l7.800 13.600a0.600 0.600 0 0 1-0.500 0.900h-14.600a0.600 0.600 0 0 1-0.500-0.900z" fill="#f0a825"/>
<path d="M478.600 124.500v5.200" stroke="#fff" stroke-width="1.900"/><circle cx="478.600" cy="132.200" r="1.050" fill="#fff"/>
</svg>
<svg class="abs" style="left:270px;top:820px" width="40" height="22" viewBox="270 931 40 22">
<circle cx="286.400" cy="939.500" r="4.500" fill="#1c1c1c"/><path d="M283.900 939.500h5M286.400 937v5" stroke="#f2f2f2" stroke-width="1.200"/>
<path d="M298.400 934.100v10.800M300.500 936.200v6.600" stroke="#77777d" stroke-width="1.100"/>
</svg>
</div>
<div id="bottombar">
<svg class="abs" style="left:0;top:0" width="1198" height="49" viewBox="0 956 1198 49">
<path d="M0 956.500H1198" stroke="#dadada" stroke-width="1"/>
<defs>
<g id="ski">
<path d="M1.300 1.400h13M1.300 1.400v12M14.300 1.400v5.500M1.300 13.600h6.500" fill="none" stroke="#4f5258" stroke-width="1.100"/>
<rect x="0" y="0" width="2.600" height="2.600" fill="#0a8ee0"/><rect x="13" y="0" width="2.600" height="2.600" fill="#0a8ee0"/><rect x="0" y="12.300" width="2.600" height="2.600" fill="#0a8ee0"/>
<g transform="translate(0.500 0.900)"><path d="M7.600 15.300l1-2.600 1.800 1.700z" fill="#555"/>
<path d="M8.600 12.700l4.200-4.400 1.900 1.700-4.300 4.400z" fill="#f2b535"/>
<path d="M12.800 8.300l1-1c0.700-0.600 1.300-0.500 1.800 0 0.500 0.500 0.600 1.100 0 1.700l-0.900 1z" fill="#c8603a"/></g>
</g>
</defs>
<g fill="#4a4248">
<rect x="10" y="974" width="1.900" height="13.800"/><path d="M12.300 981l9.700-6.200v12.400z"/>
<path d="M34.400 981l9.600-6.500v13z"/><rect x="45" y="978" width="2" height="6"/>
<path d="M60 973.300v15.600l11.700-7.800z"/>
<rect x="84" y="978" width="2" height="6"/><path d="M96.600 981l-9.600-6.500v13z"/>
<path d="M119.700 981l-9.700-6.200v12.400z"/><rect x="120.100" y="974" width="1.900" height="13.800"/>
</g>
<rect x="143" y="964" width="68" height="6" fill="#e296e4"/>
<use href="#ski" x="144.700" y="971.900"/>
<use href="#ski" x="168.700" y="971.900"/>
<use href="#ski" x="192.700" y="971.900"/>
<path d="M154 991v6H201v-6M177.500 991v6" fill="none" stroke="#c9c9c9" stroke-width="2"/>
<path d="M207 966h12v4l-5 5v23h-2v-23l-5-5z" fill="#5d6166"/>
<!-- yellow ring -->
<circle cx="1167" cy="1017.500" r="46.300" fill="none" stroke="#fbf850" stroke-width="14.400"/>
<circle cx="1167" cy="1017.500" r="37.200" fill="none" stroke="#c0672f" stroke-width="3.800"/>
<g transform="translate(1177.500 977.500)" stroke="#f0c030" stroke-width="2.200"><path d="M-4 0h8M-2 -3.500l4 7M-2 3.500l4 -7"/></g>
<g transform="translate(1177.500 986)" stroke="#9a9a9a" stroke-width="2.200"><path d="M-4 0h8M-2 -3.500l4 7M-2 3.500l4 -7"/></g>
</svg>
</div>
</body>
</html>
